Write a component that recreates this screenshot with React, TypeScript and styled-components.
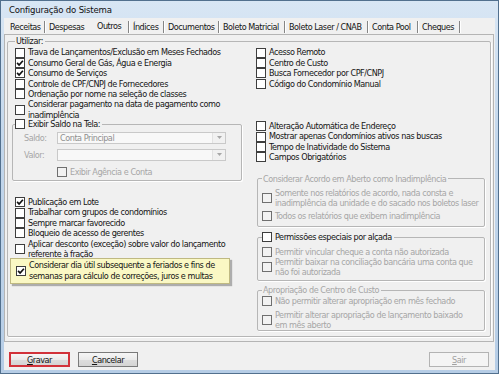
import React from 'react';
import styled, { createGlobalStyle } from 'styled-components';

const Global = createGlobalStyle`
  html, body { margin: 0; padding: 0; background: #ffffff; }
  body {
    font-family: "DejaVu Sans Condensed", "DejaVu Sans", sans-serif;
    font-stretch: condensed;
    font-size: 9px;
    letter-spacing: -0.45px;
    color: #141414;
  }
  * { box-sizing: border-box; }
`;

const Window = styled.div`
  width: 499px;
  height: 374px;
  display: flex;
  flex-direction: column;
  border: 1px solid #52708e;
  background: linear-gradient(180deg, #d8e6f4 0%, #c2d6eb 40%, #b6cde6 100%);
  padding: 0 3px 3px 3px;
`;

const TitleBar = styled.div`
  height: 17px;
  flex: none;
  display: flex;
  align-items: center;
  padding-left: 5px;
  font-size: 9.5px;
  letter-spacing: -0.2px;
  color: #101010;
`;

const Client = styled.div`
  flex: 1;
  min-height: 0;
  background: #f0f0f0;
  display: flex;
  flex-direction: column;
`;

const TabStrip = styled.div`
  flex: none;
  display: flex;
  height: 12px;
  margin: 3px 0 1px 0;
  padding-left: 2px;
`;

const Tab = styled.div<{ $w: number; $sep: boolean; $active?: boolean }>`
  width: ${p => p.$w}px;
  height: 12px;
  line-height: 13px;
  padding-left: 4px;
  white-space: nowrap;
  border-right: 1px solid ${p => (p.$sep ? '#858585' : 'transparent')};
  box-shadow: ${p => (p.$sep ? '1px 0 0 #ffffff' : 'none')};
  span {
    position: relative;
    top: ${p => (p.$active ? -1 : 0)}px;
  }
`;

const Panel = styled.div`
  flex: 1;
  min-height: 0;
  margin-right: 1px;
  border: 1px solid #b4b4b4;
  display: flex;
  flex-direction: column;
  padding: 1px 2px 4px 2px;
`;

const Group = styled.fieldset<{
  $pt?: number;
  $pb?: number;
  $pl?: number;
  $pr?: number;
  $mt?: number;
  $ml?: number;
  $w?: number;
  $fill?: boolean;
}>`
  margin: ${p => p.$mt ?? 0}px 0 0 ${p => p.$ml ?? 0}px;
  ${p => (p.$w ? `width: ${p.$w}px;` : '')}
  ${p => (p.$fill ? 'flex: 1; min-height: 0;' : '')}
  min-width: 0;
  border: 1px solid #b6b6b6;
  border-radius: 2px;
  box-shadow: 1px 1px 0 #ffffff;
  padding: ${p => p.$pt ?? 0}px ${p => p.$pr ?? 0}px ${p => p.$pb ?? 0}px
    ${p => p.$pl ?? 0}px;
`;

const Legend = styled.legend<{ $ml?: number; $disabled?: boolean }>`
  display: flex;
  align-items: center;
  height: 10.4px;
  line-height: 10.4px;
  padding: 0 2px 0 1px;
  margin-left: ${p => p.$ml ?? 0}px;
  white-space: nowrap;
  color: ${p => (p.$disabled ? '#a6a6a6' : '#141414')};
`;

const LegendBox = styled.span`
  display: flex;
  align-items: center;
  margin-left: -1px;
  margin-right: 3px;
`;

const Columns = styled.div`
  display: grid;
  grid-template-columns: 241px 1fr;
  align-items: start;
`;

const Column = styled.div`
  display: flex;
  flex-direction: column;
`;

const Row = styled.div<{ $mt?: number; $ml?: number; $disabled?: boolean }>`
  display: flex;
  align-items: center;
  min-height: 10.4px;
  margin-top: ${p => p.$mt ?? 0}px;
  margin-left: ${p => p.$ml ?? 0}px;
  color: ${p => (p.$disabled ? '#a6a6a6' : '#141414')};
  white-space: nowrap;
`;

const RowText = styled.span`
  display: block;
  line-height: 10.4px;
  margin-left: 3px;
`;

const BoxSvg = styled.svg`
  flex: none;
  display: block;
`;

const Highlight = styled.div`
  margin: -1px 26px 0 -5px;
  padding: 1px 4px 2px 5px;
  background: #faf8c4;
  border: 1px solid #bfb982;
  box-shadow: 2px 2px 1px rgba(0, 0, 0, 0.28);
`;

const FieldRow = styled.div<{ $mt?: number }>`
  display: flex;
  align-items: center;
  height: 12px;
  margin-top: ${p => p.$mt ?? 0}px;
`;

const FieldLabel = styled.span`
  width: 33px;
  color: #a6a6a6;
  white-space: nowrap;
`;

const Combo = styled.div`
  width: 169px;
  height: 12px;
  border: 1px solid #c9c9c9;
  background: #f8f8f8;
  display: flex;
  align-items: center;
  padding-left: 2px;
  color: #8f8f8f;
  white-space: nowrap;
`;

const ComboButton = styled.div`
  margin-left: auto;
  width: 13px;
  height: 100%;
  display: flex;
  align-items: center;
  justify-content: center;
  background: #f1f1f1;
  border-left: 1px solid #e2e2e2;
`;

const Footer = styled.div`
  flex: none;
  height: 28px;
  display: flex;
  align-items: flex-start;
  gap: 8px;
  padding: 10px 6px 0 5px;
`;

const Button = styled.div<{ $w: number; $highlight?: boolean; $disabled?: boolean }>`
  width: ${p => p.$w}px;
  height: 15px;
  display: flex;
  align-items: center;
  justify-content: center;
  border: ${p =>
    p.$highlight ? '2px solid #d2323a' : `1px solid ${p.$disabled ? '#b3b3b3' : '#7a7a7a'}`};
  background: linear-gradient(180deg, #f6f6f6 0%, #ebebeb 50%, #dddddd 51%, #d4d4d4 100%);
  color: ${p => (p.$disabled ? '#a0a0a0' : '#141414')};
  ${p => (p.$disabled ? 'margin-left: auto; background: #f4f4f4;' : '')}
  u { text-decoration: underline; }
`;

type CheckProps = { checked?: boolean; disabled?: boolean };

const Check = ({ checked, disabled }: CheckProps) => (
  <BoxSvg width="10" height="10" viewBox="0 0 10 10">
    <rect
      x="0.5"
      y="0.5"
      width="9"
      height="9"
      fill={disabled ? '#f2f2f2' : '#ffffff'}
      stroke={disabled ? '#6f6f6f' : '#3e3e3e'}
    />
    {checked && (
      <path d="M2.1 4.9 L4.1 7 L7.9 2.7" fill="none" stroke="#111" strokeWidth="1.7" />
    )}
  </BoxSvg>
);

type ItemProps = {
  lines: string[];
  checked?: boolean;
  disabled?: boolean;
  mt?: number;
  ml?: number;
};

const Item = ({ lines, checked, disabled, mt, ml }: ItemProps) => (
  <Row $mt={mt} $ml={ml} $disabled={disabled}>
    <Check checked={checked} disabled={disabled} />
    <RowText>
      {lines.map((l, i) => (
        <React.Fragment key={i}>
          {i > 0 && <br />}
          {l}
        </React.Fragment>
      ))}
    </RowText>
  </Row>
);

const Arrow = () => (
  <svg width="5" height="3" viewBox="0 0 5 3">
    <path d="M0 0 H5 L2.5 3 Z" fill="#a7a7a7" />
  </svg>
);

const tabs = [
  { label: 'Receitas', w: 39 },
  { label: 'Despesas', w: 48, noSep: true },
  { label: 'Outros', w: 36, active: true },
  { label: 'Índices', w: 35 },
  { label: 'Documentos', w: 55 },
  { label: 'Boleto Matricial', w: 66 },
  { label: 'Boleto Laser / CNAB', w: 83 },
  { label: 'Conta Pool', w: 50 },
  { label: 'Cheques', w: 42 },
];

export default function App() {
  return (
    <>
      <Global />
      <Window>
        <TitleBar>Configuração do Sistema</TitleBar>
        <Client>
          <TabStrip>
            {tabs.map(t => (
              <Tab key={t.label} $w={t.w} $sep={!t.noSep} $active={t.active}>
                <span>{t.label}</span>
              </Tab>
            ))}
          </TabStrip>
          <Panel>
            <Group $fill $pt={1} $pl={7} $pr={4}>
              <Legend>Utilizar:</Legend>
              <Columns>
                <Column>
                  <Item lines={['Trava de Lançamentos/Exclusão em Meses Fechados']} />
                  <Item checked lines={['Consumo Geral de Gás, Água e Energia']} />
                  <Item checked lines={['Consumo de Serviços']} />
                  <Item lines={['Controle de CPF/CNPJ de Fornecedores']} />
                  <Item lines={['Ordenação por nome na seleção de classes']} />
                  <Item
                    lines={['Considerar pagamento na data de pagamento como', 'inadimplência']}
                  />
                  <Group $mt={-1} $ml={-3} $w={230} $pt={2} $pb={3} $pl={11}>
                    <Legend $ml={-9}>
                      <LegendBox>
                        <Check />
                      </LegendBox>
                      Exibir Saldo na Tela:
                    </Legend>
                    <FieldRow>
                      <FieldLabel>Saldo:</FieldLabel>
                      <Combo>
                        Conta Principal
                        <ComboButton>
                          <Arrow />
                        </ComboButton>
                      </Combo>
                    </FieldRow>
                    <FieldRow $mt={5}>
                      <FieldLabel>Valor:</FieldLabel>
                      <Combo>
                        <ComboButton>
                          <Arrow />
                        </ComboButton>
                      </Combo>
                    </FieldRow>
                    <Item disabled mt={6} ml={33} lines={['Exibir Agência e Conta']} />
                  </Group>
                  <Item mt={16} checked lines={['Publicação em Lote']} />
                  <Item lines={['Trabalhar com grupos de condomínios']} />
                  <Item lines={['Sempre marcar favorecido']} />
                  <Item lines={['Bloqueio de acesso de gerentes']} />
                  <Item
                    lines={['Aplicar desconto (exceção) sobre valor do lançamento', 'referente à fração']}
                  />
                  <Highlight>
                    <Item
                      checked
                      lines={[
                        'Considerar dia útil subsequente a feriados e fins de',
                        'semanas para cálculo de correções, juros e multas',
                      ]}
                    />
                  </Highlight>
                </Column>
                <Column>
                  <Item lines={['Acesso Remoto']} />
                  <Item lines={['Centro de Custo']} />
                  <Item lines={['Busca Fornecedor por CPF/CNPJ']} />
                  <Item lines={['Código do Condomínio Manual']} />
                  <Item mt={32} lines={['Alteração Automática de Endereço']} />
                  <Item lines={['Mostrar apenas Condomínios ativos nas buscas']} />
                  <Item lines={['Tempo de Inatividade do Sistema']} />
                  <Item lines={['Campos Obrigatórios']} />
                  <Group $mt={11} $ml={1} $w={228} $pt={4} $pb={5} $pl={4}>
                    <Legend $disabled>Considerar Acordo em Aberto como Inadimplência</Legend>
                    <Item
                      disabled
                      lines={[
                        'Somente nos relatórios de acordo, nada consta e',
                        'inadimplência da unidade e do sacado nos boletos laser',
                      ]}
                    />
                    <Item disabled mt={2} lines={['Todos os relatórios que exibem inadimplência']} />
                  </Group>
                  <Group $mt={5} $ml={1} $w={228} $pt={4} $pb={2} $pl={4}>
                    <Legend>
                      <LegendBox>
                        <Check />
                      </LegendBox>
                      Permissões especiais por alçada
                    </Legend>
                    <Item disabled lines={['Permitir vincular cheque a conta não autorizada']} />
                    <Item
                      disabled
                      lines={['Permitir baixar na conciliação bancária uma conta que', 'não foi autorizada']}
                    />
                  </Group>
                  <Group $mt={4} $ml={1} $w={228} $pt={1} $pb={0} $pl={4}>
                    <Legend $disabled>Apropriação de Centro de Custo</Legend>
                    <Item disabled lines={['Não permitir alterar apropriação em mês fechado']} />
                    <Item
                      disabled
                      mt={3}
                      lines={['Permitir alterar apropriação de lançamento baixado', 'em mês aberto']}
                    />
                  </Group>
                </Column>
              </Columns>
            </Group>
          </Panel>
          <Footer>
            <Button $w={61} $highlight>
              <span>
                <u>G</u>ravar
              </span>
            </Button>
            <Button $w={60}>
              <span>
                <u>C</u>ancelar
              </span>
            </Button>
            <Button $w={60} $disabled>
              <span>
                <u>S</u>air
              </span>
            </Button>
          </Footer>
        </Client>
      </Window>
    </>
  );
}
